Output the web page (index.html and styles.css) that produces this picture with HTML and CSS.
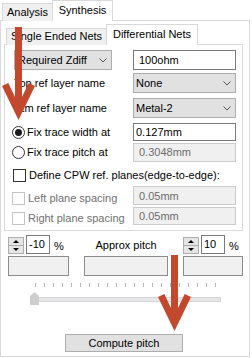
FILE: index.html
```html
<!DOCTYPE html>
<html lang="en">
<head>
  <meta charset="UTF-8">
  <title>Synthesis</title>
  <link rel="stylesheet" href="styles.css">
</head>
<body>
  <div class="tabs">
    <div class="tab">Analysis</div>
    <div class="tab tab-active">Synthesis</div>
  </div>

  <div class="pane outer">
    <div class="subtabs">
      <div class="subtab">Single Ended Nets</div>
      <div class="subtab subtab-active">Differential Nets</div>
    </div>

    <div class="pane inner">
      <div class="form">
        <div class="combo combo-left">
          <span>Required Zdiff</span>
          <svg width="8" height="5"><polyline points="0.5,0.5 4,4 7.5,0.5" fill="none" stroke="#555"/></svg>
        </div>
        <div class="input input-pad">100ohm</div>

        <div class="label">Top ref layer name</div>
        <div class="combo">
          <span>None</span>
          <svg width="8" height="5"><polyline points="0.5,0.5 4,4 7.5,0.5" fill="none" stroke="#555"/></svg>
        </div>

        <div class="label">Btm ref layer name</div>
        <div class="combo">
          <span>Metal-2</span>
          <svg width="8" height="5"><polyline points="0.5,0.5 4,4 7.5,0.5" fill="none" stroke="#555"/></svg>
        </div>

        <div class="option"><span class="radio checked"></span>Fix trace width at</div>
        <div class="input input-short">0.127mm</div>

        <div class="option"><span class="radio"></span>Fix trace pitch at</div>
        <div class="input disabled">0.3048mm</div>

        <div class="option option-wide"><span class="check"></span>Define CPW ref. planes(edge-to-edge):</div>

        <div class="option muted"><span class="check"></span>Left plane spacing</div>
        <div class="input disabled input-raised">0.05mm</div>

        <div class="option muted"><span class="check"></span>Right plane spacing</div>
        <div class="input disabled input-raised input-short">0.05mm</div>
      </div>
    </div>

    <div class="spin-row">
      <div class="spin">
        <div class="spin-buttons"><span class="up"></span><span class="down"></span></div>
        <div class="spin-input">-10</div>
        <span class="percent">%</span>
      </div>
      <div class="approx">Approx pitch</div>
      <div class="spin">
        <div class="spin-buttons"><span class="up"></span><span class="down"></span></div>
        <div class="spin-input">10</div>
        <span class="percent">%</span>
      </div>
    </div>

    <div class="results">
      <div class="result"></div>
      <div class="result"></div>
      <div class="result"></div>
    </div>

    <div class="slider">
      <div class="ticks"></div>
      <div class="groove"></div>
      <svg class="handle" width="10" height="14"><polygon points="0,4 4.5,0 9,4 9,13 0,13" fill="#cdcdcd"/></svg>
    </div>

    <button class="compute">Compute pitch</button>
  </div>

  <!-- annotation arrows drawn over the screenshot -->
  <svg class="arrows" width="252" height="358" viewBox="0 0 252 358">
    <polygon points="15,27 22,27 22,97 28.7,82.9 35,86 18.5,120 2,86 8.3,82.9 15,97" fill="#c2482e"/>
    <polygon points="171,255 178,255 178,308 184.7,293.9 191,297 174.5,331 158,297 164.3,293.9 171,308" fill="#c2482e"/>
  </svg>
</body>
</html>
```

FILE: styles.css
```css
body {
  margin: 0;
  width: 252px;
  height: 358px;
  position: relative;
  overflow: hidden;
  background: #ffffff;
  color: #000000;
  font-family: "Liberation Sans", Arial, sans-serif;
  font-size: 11px;
}
.tabs {
  display: flex;
  align-items: flex-end;
  height: 21px;
  padding-left: 2px;
}
.tab {
  box-sizing: border-box;
  width: 51px;
  height: 18px;
  border: 1px solid #d9d9d9;
  border-bottom: none;
  background: #f0f0f0;
  text-align: center;
  line-height: 16px;
}
.tab-active {
  width: 61px;
  height: 21px;
  margin-left: -1px;
  background: #ffffff;
  line-height: 18px;
  position: relative;
  z-index: 1;
}
.pane {
  box-sizing: border-box;
  border: 1px solid #d9d9d9;
  background: #ffffff;
}
.outer {
  width: 250px;
  height: 337px;
  margin-top: -1px;
}
.subtabs {
  display: flex;
  align-items: flex-end;
  height: 21px;
  margin-top: 3px;
  padding-left: 5px;
}
.subtab {
  box-sizing: border-box;
  width: 101px;
  height: 17px;
  border: 1px solid #d9d9d9;
  border-bottom: none;
  background: #f0f0f0;
  text-align: center;
  line-height: 15px;
}
.subtab-active {
  width: 92px;
  height: 21px;
  margin-left: -1px;
  background: #ffffff;
  line-height: 18px;
  position: relative;
  z-index: 1;
}
.inner {
  width: 239px;
  height: 187px;
  margin: -1px 0 0 3px;
  padding: 4px 0 0 8px;
}
.form {
  display: grid;
  grid-template-columns: 120px 103px;
  grid-template-rows: 22px 24px 26px 22px 18px 28px 18px 22px;
  align-items: center;
}
.label {
  padding-left: 1px;
}
.combo {
  box-sizing: border-box;
  height: 20px;
  border: 1px solid #adadad;
  background: #e1e1e1;
  display: flex;
  align-items: center;
  justify-content: space-between;
  padding: 0 4px 0 2px;
}
.combo-left {
  width: 98px;
  margin-left: 1px;
  padding-left: 3px;
}
.input {
  box-sizing: border-box;
  height: 18px;
  border: 1px solid #7a7a7a;
  background: #ffffff;
  display: flex;
  align-items: center;
  padding-left: 2px;
}
.input-pad {
  height: 20px;
  padding-left: 5px;
}
.input.disabled {
  height: 19px;
  border-color: #cccccc;
  background: #f0f0f0;
  color: #6d6d6d;
  padding-left: 5px;
}
.input-raised {
  height: 20px;
  margin-bottom: 5px;
}
.input.input-short {
  height: 18px;
}
.option {
  display: flex;
  align-items: center;
  gap: 2px;
  margin-left: -1px;
}
.option-wide {
  grid-column: 1 / 3;
  gap: 3px;
  margin-left: 0;
}
.muted {
  color: #707070;
  gap: 3px;
}
.radio {
  box-sizing: border-box;
  width: 13px;
  height: 13px;
  border: 1px solid #333333;
  border-radius: 50%;
  background: #ffffff;
  display: flex;
  align-items: center;
  justify-content: center;
}
.radio.checked::after {
  content: "";
  width: 7px;
  height: 7px;
  border-radius: 50%;
  background: #1a1a1a;
}
.check {
  box-sizing: border-box;
  width: 13px;
  height: 13px;
  border: 1px solid #333333;
  background: #ffffff;
}
.muted .check {
  border-color: #c4c4c4;
}
.spin-row {
  display: grid;
  grid-template-columns: 61px 84px 60px;
  column-gap: 15px;
  align-items: center;
  height: 19px;
  margin: 4px 0 0 7px;
}
.spin {
  display: flex;
  align-items: center;
}
.spin-buttons {
  box-sizing: border-box;
  width: 16px;
  height: 17px;
  margin-top: 2px;
  border: 1px solid #adadad;
  background: #e5e5e5;
  display: flex;
  flex-direction: column;
}
.spin-buttons span {
  flex: 1;
  display: flex;
  align-items: center;
  justify-content: center;
}
.spin-buttons .down {
  border-top: 1px solid #adadad;
}
.up::after {
  content: "";
  border-left: 3px solid transparent;
  border-right: 3px solid transparent;
  border-bottom: 3px solid #000000;
}
.down::after {
  content: "";
  border-left: 3px solid transparent;
  border-right: 3px solid transparent;
  border-top: 3px solid #000000;
}
.spin-input {
  box-sizing: border-box;
  width: 24px;
  height: 19px;
  margin-left: 2px;
  border: 1px solid #7a7a7a;
  background: #ffffff;
  padding-left: 2px;
  line-height: 17px;
}
.percent {
  margin-left: 4px;
  margin-top: 3px;
}
.approx {
  text-align: center;
}
.results {
  display: grid;
  grid-template-columns: 61px 84px 60px;
  column-gap: 15px;
  height: 20px;
  margin: 2px 0 0 7px;
}
.result {
  border: 1px solid #8c8c8c;
  background: #f0f0f0;
}
.slider {
  position: relative;
  width: 192px;
  height: 23px;
  margin: 7px 0 0 29px;
}
.ticks {
  width: 182px;
  height: 4px;
  margin-left: 5px;
  background: repeating-linear-gradient(90deg, #b8b8b8 0 1px, transparent 1px 9px);
}
.groove {
  box-sizing: border-box;
  width: 188px;
  height: 5px;
  margin: 10px 0 0 3px;
  border: 1px solid #d6d6d6;
  background: #e7e7ea;
}
.handle {
  position: absolute;
  left: 0;
  top: 9px;
}
.compute {
  display: block;
  box-sizing: border-box;
  width: 118px;
  height: 18px;
  margin: 28px 0 0 64px;
  padding: 0;
  border: 1px solid #adadad;
  background: #e1e1e1;
  color: #000000;
  font-family: "Liberation Sans", Arial, sans-serif;
  font-size: 11px;
}
.arrows {
  position: absolute;
  left: 0;
  top: 0;
  pointer-events: none;
}
```
